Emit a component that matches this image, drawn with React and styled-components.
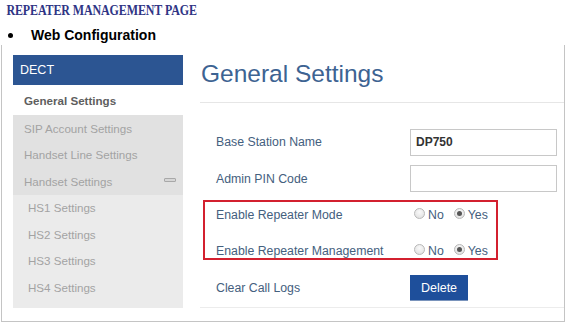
import React from 'react';
import styled, { createGlobalStyle } from 'styled-components';

const GlobalStyle = createGlobalStyle`
  body {
    margin: 0;
    background: #fff;
    font-family: "Liberation Sans", Arial, sans-serif;
  }
`;

const Page = styled.div`
  width: 567px;
  height: 322px;
  overflow: hidden;
`;

const DocTitle = styled.div`
  font-family: "Liberation Serif", "Times New Roman", serif;
  font-weight: bold;
  font-size: 15px;
  letter-spacing: -0.15px;
  color: #2f3585;
  padding: 2px 0 0 8px;
  line-height: 16px;
  white-space: nowrap;
  transform: scaleX(0.8);
  transform-origin: left center;
`;

const Bullet = styled.div`
  display: flex;
  align-items: center;
  height: 20px;
  margin-top: 7px;
  padding-left: 8px;
  font-weight: bold;
  font-size: 14px;
  color: #000;
  &::before {
    content: '';
    width: 5px;
    height: 5px;
    border-radius: 50%;
    background: #000;
    margin-right: 18px;
  }
`;

const Frame = styled.div`
  margin-left: 1px;
  width: 564px;
  height: 277px;
  box-sizing: border-box;
  border: 1px solid #c4c4c4;
  border-top: none;
  display: flex;
  padding-top: 10px;
`;

const Sidebar = styled.div`
  margin-left: 11px;
  width: 170px;
  flex-shrink: 0;
  display: flex;
  flex-direction: column;
  align-self: flex-start;
`;

const SideHeader = styled.div`
  height: 30px;
  background: #2c5592;
  color: #fff;
  font-size: 12.5px;
  display: flex;
  align-items: center;
  padding-left: 7px;
`;

const SideItem = styled.div`
  height: ${p => p.$h || 26.5}px;
  display: flex;
  align-items: center;
  justify-content: space-between;
  padding: 0 7px 0 ${p => (p.$sub ? 15 : 11)}px;
  font-size: 11.6px;
  color: ${p => (p.$active ? '#5e5e5e' : '#a3a3a3')};
  font-weight: ${p => (p.$active ? 'bold' : 'normal')};
  background: ${p => (p.$active ? '#fff' : p.$sub ? '#ebebeb' : '#e1e1e1')};
`;

const SubGroup = styled.div`
  background: #ebebeb;
  padding-bottom: 7px;
`;

const Collapse = styled.span`
  width: 10px;
  height: 2px;
  border: 1px solid #a8a8a8;
  border-radius: 1px;
  background: #d6d6d6;
  margin-top: -2px;
`;

const Main = styled.div`
  margin-left: 17px;
  flex: 1;
  display: flex;
  flex-direction: column;
`;

const Heading = styled.div`
  height: 48px;
  box-sizing: border-box;
  padding: 5px 0 0 1px;
  font-size: 24.5px;
  line-height: 28px;
  color: #3d6392;
  border-bottom: 1px solid #e6e6e6;
`;

const Form = styled.div`
  padding-top: 21px;
  border-bottom: 1px solid #ececec;
`;

const Row = styled.div`
  display: flex;
  align-items: center;
  height: 36.5px;
  padding-left: 16px;
`;

const Label = styled.div`
  width: 194px;
  font-size: 12.3px;
  color: #44607e;
`;

const Input = styled.div`
  width: 147px;
  height: 27px;
  box-sizing: border-box;
  border: 1px solid #c8c8c8;
  font-size: 12px;
  font-weight: bold;
  color: #333;
  display: flex;
  align-items: center;
  padding-left: 5px;
`;

const Highlight = styled.div`
  margin: 3px 0 10px 3px;
  width: 295px;
  height: 60px;
  box-sizing: border-box;
  border: 2px solid #d3202f;
  padding-top: 3px;
  display: flex;
  flex-direction: column;
  gap: 16px;
  & > div {
    padding-left: 11px;
    height: 20px;
    flex-shrink: 0;
  }
`;

const Radios = styled.div`
  display: flex;
  align-items: center;
  font-size: 12.3px;
  color: #44607e;
  gap: 3px;
  margin-left: 4px;
`;

const Radio = styled.span`
  width: 11px;
  height: 11px;
  border-radius: 50%;
  border: 1px solid #b8b8b8;
  background: radial-gradient(circle at 50% 35%, #fafafa, #dcdcdc);
  box-sizing: border-box;
  display: inline-flex;
  align-items: center;
  justify-content: center;
  margin-top: -3px;
  &::after {
    content: '';
    width: 5px;
    height: 5px;
    border-radius: 50%;
    background: ${p => (p.$on ? '#555' : 'transparent')};
  }
`;

const Opt = styled.span`
  margin-right: 7px;
  &:last-child {
    margin-right: 0;
  }
`;

const Button = styled.div`
  width: 58px;
  height: 25px;
  background: #1e4f9b;
  color: #fff;
  font-size: 12.5px;
  display: flex;
  align-items: center;
  justify-content: center;
  border-bottom: 1px solid #7a94bc;
`;

const menu = ['SIP Account Settings', 'Handset Line Settings'];
const subs = ['HS1 Settings', 'HS2 Settings', 'HS3 Settings', 'HS4 Settings'];

const RadioPair = () => (
  <Radios>
    <Radio />
    <Opt>No</Opt>
    <Radio $on />
    <Opt>Yes</Opt>
  </Radios>
);

export default function App() {
  return (
    <Page>
      <GlobalStyle />
      <DocTitle>REPEATER MANAGEMENT PAGE</DocTitle>
      <Bullet>Web Configuration</Bullet>
      <Frame>
        <Sidebar>
          <SideHeader>DECT</SideHeader>
          <SideItem $active $h={30}>General Settings</SideItem>
          {menu.map(m => (
            <SideItem key={m}>{m}</SideItem>
          ))}
          <SideItem>
            Handset Settings
            <Collapse />
          </SideItem>
          <SubGroup>
            {subs.map(s => (
              <SideItem key={s} $sub>{s}</SideItem>
            ))}
          </SubGroup>
        </Sidebar>
        <Main>
          <Heading>General Settings</Heading>
          <Form>
            <Row>
              <Label>Base Station Name</Label>
              <Input>DP750</Input>
            </Row>
            <Row>
              <Label>Admin PIN Code</Label>
              <Input />
            </Row>
            <Highlight>
              <Row>
                <Label>Enable Repeater Mode</Label>
                <RadioPair />
              </Row>
              <Row>
                <Label>Enable Repeater Management</Label>
                <RadioPair />
              </Row>
            </Highlight>
            <Row>
              <Label>Clear Call Logs</Label>
              <Button>Delete</Button>
            </Row>
          </Form>
        </Main>
      </Frame>
    </Page>
  );
}
